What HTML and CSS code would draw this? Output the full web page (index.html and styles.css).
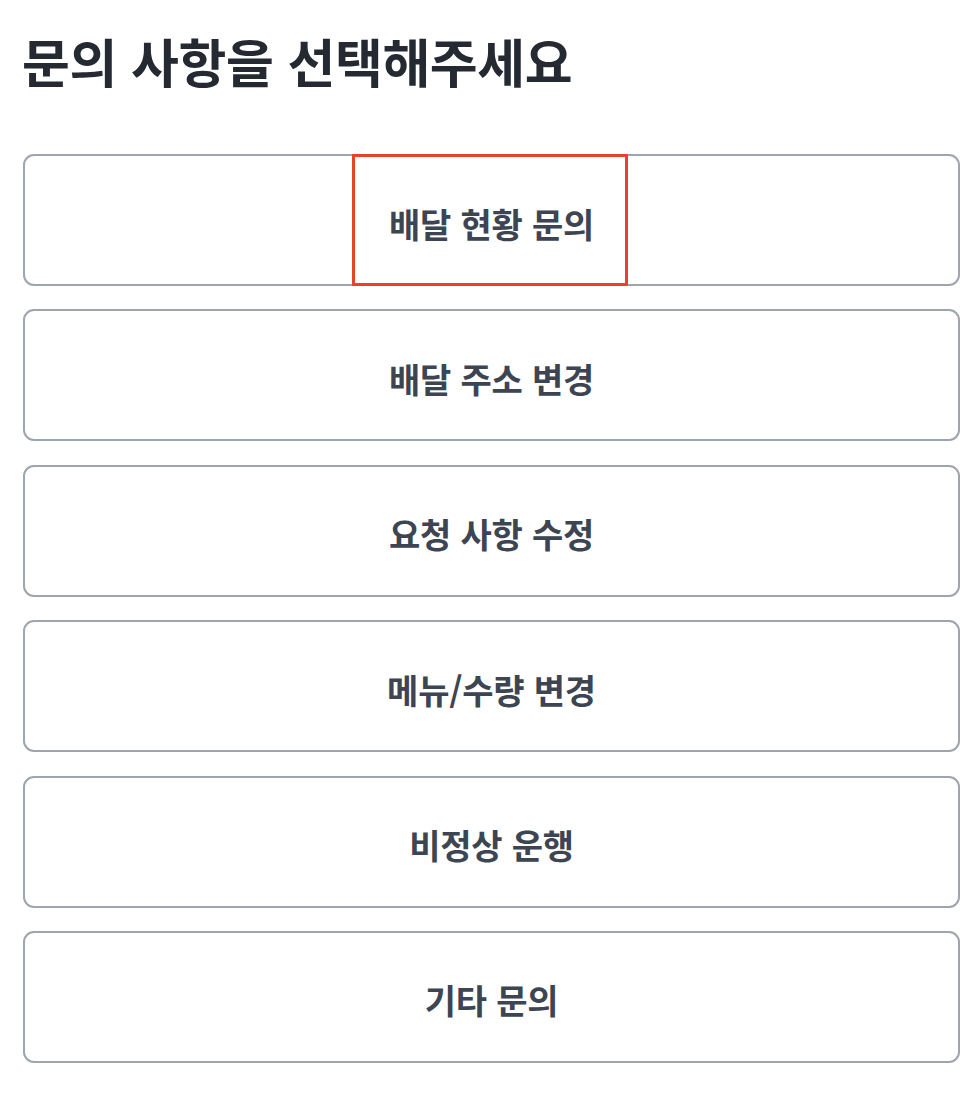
FILE: index.html
```html
<!DOCTYPE html>
<html lang="ko">
<head>
<meta charset="utf-8">
<link rel="stylesheet" href="styles.css">
</head>
<body>
<main class="page">
  <h1 class="title">문의 사항을 선택해주세요</h1>
  <div class="options">
    <button class="option"><span class="highlight"></span>배달 현황 문의</button>
    <button class="option">배달 주소 변경</button>
    <button class="option">요청 사항 수정</button>
    <button class="option">메뉴/수량 변경</button>
    <button class="option">비정상 운행</button>
    <button class="option">기타 문의</button>
  </div>
</main>
</body>
</html>
```
FILE: styles.css
```css
* { box-sizing: border-box; }
html, body { margin: 0; padding: 0; background: #ffffff; }
body {
  font-family: "Noto Sans CJK KR", "Noto Sans", sans-serif;
  color: #262b33;
}
.page {
  padding: 24px 20px 0 23px;
}
.title {
  margin: 0 0 56px -1px;
  font-size: 52px;
  font-weight: 700;
  line-height: 74px;
  letter-spacing: -0.4px;
  color: #252a32;
}
.options {
  display: flex;
  flex-direction: column;
  gap: 23.4px;
}
.option {
  position: relative;
  display: flex;
  align-items: center;
  justify-content: center;
  height: 132px;
  width: 100%;
  padding: 6px 0 0 0;
  background: #ffffff;
  border: 2px solid #9ea5ad;
  border-radius: 11px;
  font-family: "Noto Sans CJK KR", "Noto Sans", sans-serif;
  font-size: 34px;
  font-weight: 700;
  color: #3d4452;
  letter-spacing: -0.2px;
}
.highlight {
  position: absolute;
  top: -2px;
  bottom: -2px;
  left: 327px;
  width: 276px;
  border: 3px solid #e8432a;
}
```
